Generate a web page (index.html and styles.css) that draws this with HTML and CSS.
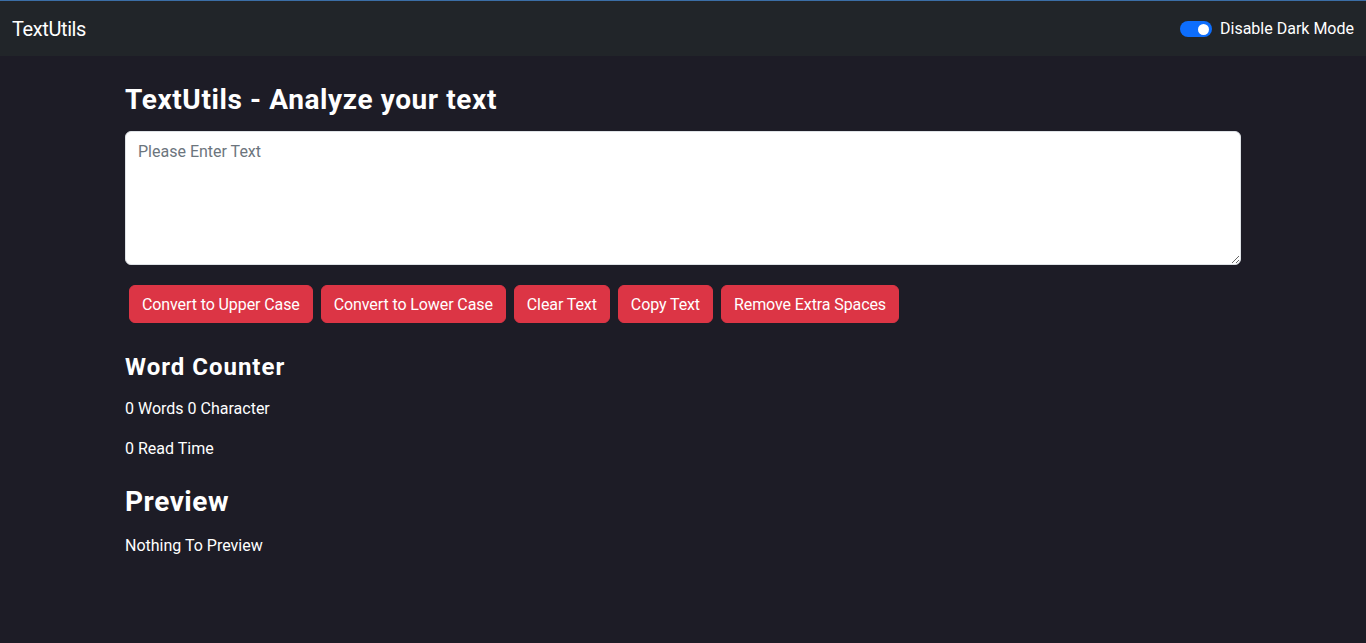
FILE: index.html
```html
<!DOCTYPE html>
<html lang="en">
<head>
<meta charset="utf-8">
<title>TextUtils</title>
<link rel="stylesheet" href="styles.css">
</head>
<body>
<nav class="navbar">
  <a class="brand" href="#">TextUtils</a>
  <label class="switch">
    <span class="switch-track"><span class="switch-knob"></span></span>
    <span class="switch-label">Disable Dark Mode</span>
  </label>
</nav>
<main class="container">
  <h1 class="title">TextUtils - Analyze your text</h1>
  <div class="field">
    <textarea class="textbox" rows="5" placeholder="Please Enter Text"></textarea>
  </div>
  <div class="actions">
    <button class="btn">Convert to Upper Case</button>
    <button class="btn">Convert to Lower Case</button>
    <button class="btn">Clear Text</button>
    <button class="btn">Copy Text</button>
    <button class="btn">Remove Extra Spaces</button>
  </div>
  <section class="summary">
    <h2 class="sub">Word Counter</h2>
    <p class="line">0 Words 0 Character</p>
    <p class="line">0 Read Time</p>
    <h2 class="sub big">Preview</h2>
    <p class="line">Nothing To Preview</p>
  </section>
</main>
</body>
</html>
```
FILE: styles.css
```css
* { box-sizing: border-box; }
html, body { margin: 0; padding: 0; }
body {
  background: #1d1c26;
  color: #ffffff;
  font-family: Roboto, "Liberation Sans", sans-serif;
  font-size: 16px;
  line-height: 24px;
  min-height: 643px;
}
.navbar {
  display: flex;
  align-items: center;
  justify-content: space-between;
  height: 56px;
  border-top: 1px solid #3b6ea6;
  background: #212529;
  padding: 0 12px;
}
.brand {
  color: #ffffff;
  text-decoration: none;
  font-size: 20px;
  line-height: 30px;
  letter-spacing: -0.4px;
}
.switch {
  display: flex;
  align-items: center;
  gap: 8px;
  margin-top: 1px;
}
.switch-track {
  display: flex;
  align-items: center;
  justify-content: flex-end;
  width: 32px;
  height: 16px;
  border-radius: 8px;
  background: #0d6efd;
  padding: 0 3px;
}
.switch-knob {
  width: 11px;
  height: 11px;
  border-radius: 50%;
  background: #ffffff;
}
.switch-label { font-size: 16px; line-height: 24px; }
.container {
  width: 1116px;
  margin: 0 auto;
  padding-top: 27px;
}
.title {
  margin: 0 0 14px;
  font-size: 28px;
  line-height: 34px;
  font-weight: 700;
  letter-spacing: 0.6px;
}
.field { margin-bottom: 16px; }
.textbox {
  display: block;
  width: 100%;
  height: 134px;
  padding: 8px 12px 4px;
  border: 1px solid #dee2e6;
  border-radius: 6px;
  background: #ffffff;
  color: #212529;
  font-family: inherit;
  font-size: 16px;
  line-height: 24px;
}
.textbox::placeholder { color: #6c757d; }
.actions {
  display: flex;
  gap: 8px;
  padding: 4px;
}
.btn {
  background: #dc3545;
  color: #ffffff;
  border: 1px solid #dc3545;
  border-radius: 6px;
  padding: 7px 12px 5px;
  font-family: inherit;
  font-size: 16px;
  line-height: 24px;
  letter-spacing: -0.1px;
}
.summary { padding-top: 2px; }
.sub {
  margin: 24px 0 15px;
  font-size: 24px;
  line-height: 29px;
  font-weight: 700;
  letter-spacing: 1px;
}
.sub.big { font-size: 28px; line-height: 34px; letter-spacing: 0.55px; }
.line { margin: 0 0 16px; }
```
